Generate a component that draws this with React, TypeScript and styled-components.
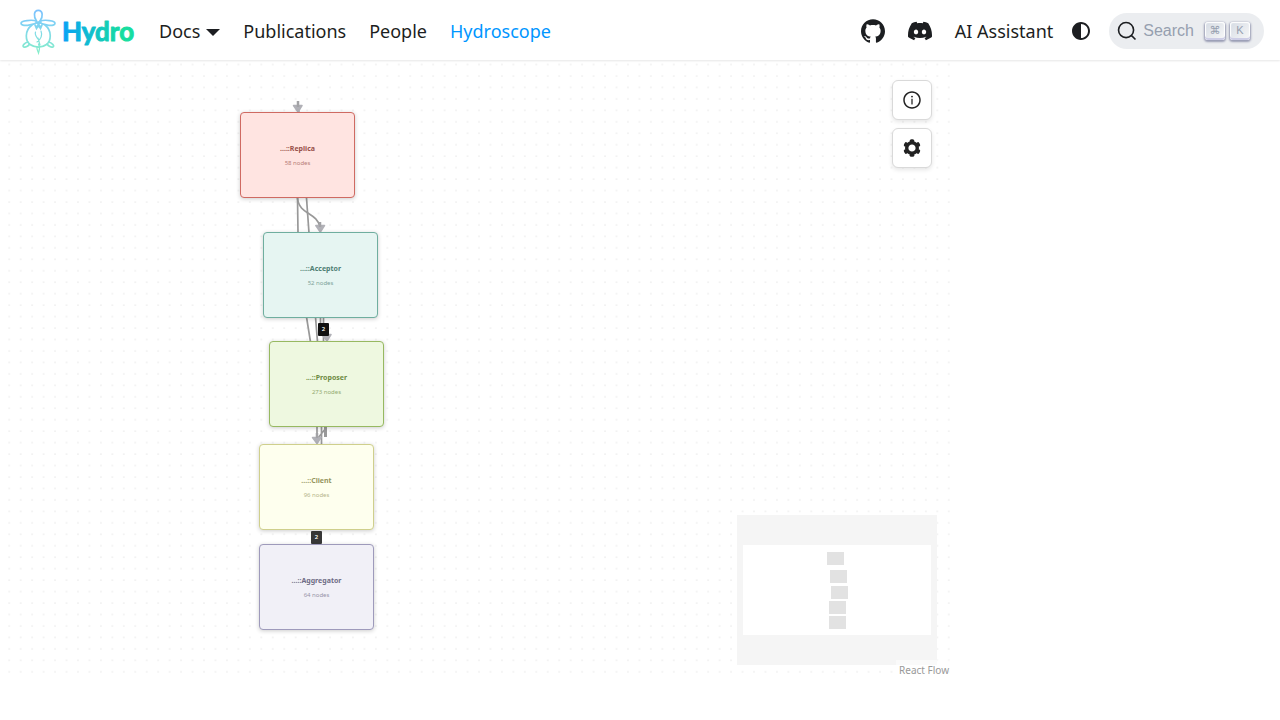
import React from "react";
import styled, { createGlobalStyle } from "styled-components";
import { SiGithub, SiDiscord } from "react-icons/si";
import { AiOutlineInfoCircle } from "react-icons/ai";

const GlobalStyle = createGlobalStyle`
  *, *::before, *::after { box-sizing: border-box; }
  body {
    margin: 0;
    background: #fff;
    color: #1c1e21;
    font-family: "Noto Sans", "Open Sans", sans-serif;
  }
`;

const Navbar = styled.nav`
  position: relative;
  z-index: 2;
  display: flex;
  align-items: center;
  justify-content: space-between;
  height: 60px;
  padding: 2px 16px 0 20px;
  background: #fff;
  box-shadow: 0 1px 2px rgba(0, 0, 0, 0.1);
`;

const NavGroup = styled.div`
  display: flex;
  align-items: center;
`;

const Brand = styled.a`
  display: flex;
  margin-right: 13px;
`;

const NavLink = styled.a<{ $active?: boolean }>`
  display: flex;
  align-items: center;
  gap: 6px;
  padding: 0 12px 0 11px;
  font-size: 18px;
  font-weight: 400;
  line-height: 28px;
  white-space: nowrap;
  text-decoration: none;
  color: ${(p) => (p.$active ? "#0096ff" : "#1c1e21")};
`;

const Caret = styled.span`
  margin-top: 2px;
  border: 7px solid transparent;
  border-top-color: currentColor;
  border-bottom-width: 0;
`;

const ModeToggle = styled.button`
  display: flex;
  align-items: center;
  justify-content: center;
  width: 32px;
  height: 32px;
  margin-right: 12px;
  padding: 0;
  border: 0;
  border-radius: 50%;
  background: none;
  color: inherit;
`;

const SearchButton = styled.button`
  display: flex;
  align-items: center;
  height: 36px;
  padding: 0 12px 0 8px;
  border: 0;
  border-radius: 40px;
  background: #ebedf0;
  color: #1c1e21;
`;

const SearchText = styled.span`
  padding: 0 9px 0 6px;
  font: 16px "Liberation Sans", Arial, sans-serif;
  color: #969faf;
`;

const Key = styled.kbd`
  display: flex;
  align-items: center;
  justify-content: center;
  width: 20px;
  height: 18px;
  margin-left: 2px;
  margin-right: 3px;
  padding-bottom: 2px;
  border-radius: 3px;
  background: linear-gradient(-225deg, #d5dbe4, #f8f8f8);
  box-shadow: inset 0 -2px 0 0 #cdcde6, inset 0 0 1px 1px #fff,
    0 1px 2px 1px rgba(30, 35, 90, 0.4);
  font: 11px "Liberation Sans", "DejaVu Sans", sans-serif;
  color: #969faf;

  &:last-child {
    margin-right: 2px;
  }
`;

const Workspace = styled.main`
  display: grid;
  grid-template-columns: minmax(0, 1fr) 328px;
  min-height: calc(100vh - 100px);
`;

const Canvas = styled.section`
  position: relative;
  overflow: hidden;
`;

const Layer = styled.svg`
  position: absolute;
  inset: 0;
  width: 100%;
  height: 100%;
`;

const Node = styled.article<{ $x: number; $y: number; $fill: string; $line: string; $ink: string }>`
  position: absolute;
  left: ${(p) => p.$x}px;
  top: ${(p) => p.$y}px;
  display: flex;
  flex-direction: column;
  align-items: center;
  justify-content: center;
  gap: 4px;
  width: 115px;
  height: 86px;
  padding-top: 2px;
  border: 1px solid ${(p) => p.$line};
  border-radius: 4px;
  background: ${(p) => p.$fill};
  box-shadow: 0 1px 4px rgba(0, 0, 0, 0.2);
  color: ${(p) => p.$ink};
`;

const NodeName = styled.strong`
  font-size: 7px;
  font-weight: 700;
  line-height: 10px;
`;

const NodeCount = styled.span`
  font-size: 6px;
  line-height: 10px;
  opacity: 0.7;
`;

const EdgeCount = styled.span<{ $x: number; $y: number; $fade?: boolean }>`
  position: absolute;
  left: ${(p) => p.$x}px;
  top: ${(p) => p.$y}px;
  width: 11px;
  height: 13px;
  border-radius: 1px;
  background: ${(p) => (p.$fade ? "rgba(20, 20, 20, 0.85)" : "#111")};
  color: #fff;
  font-size: 6px;
  font-weight: 600;
  line-height: 13px;
  text-align: center;
`;

const Controls = styled.div`
  position: absolute;
  top: 20px;
  right: 20px;
  display: flex;
  flex-direction: column;
  gap: 8px;
`;

const ControlButton = styled.button`
  display: flex;
  align-items: center;
  justify-content: center;
  width: 40px;
  height: 40px;
  padding: 0;
  border: 1px solid #d9d9d9;
  border-radius: 6px;
  background: #fff;
  box-shadow: 0 2px 4px rgba(0, 0, 0, 0.1);
  color: #222;
`;

const MiniMap = styled.svg`
  position: absolute;
  right: 15px;
  bottom: 15px;
  width: 200px;
  height: 150px;
  background: #fff;
`;

const Attribution = styled.a`
  position: absolute;
  right: 0;
  bottom: 0;
  padding: 3px;
  background: rgba(255, 255, 255, 0.5);
  color: #999;
  font-size: 10px;
  line-height: 14px;
  text-decoration: none;
`;

const nodes = [
  { name: "Replica", count: 58, x: 240, y: 52, fill: "#ffe4e1", line: "#cf6a62", ink: "#98504a" },
  { name: "Acceptor", count: 52, x: 263, y: 172, fill: "#e6f5f2", line: "#6fae9f", ink: "#4f7f74" },
  { name: "Proposer", count: 273, x: 269, y: 281, fill: "#eef8e0", line: "#97b961", ink: "#6d8a42" },
  { name: "Client", count: 96, x: 259, y: 384, fill: "#feffee", line: "#cfcf8c", ink: "#96965f" },
  { name: "Aggregator", count: 64, x: 259, y: 484, fill: "#f1f0f7", line: "#9e9abb", ink: "#6f6c85" },
];

const miniNodes = [
  [90, 37],
  [93, 55],
  [94, 71],
  [92, 86],
  [92, 101],
];

function Logo() {
  return (
    <svg width="115" height="50" viewBox="20 6 115 50" role="img" aria-label="Hydro">
      <defs>
        <linearGradient id="turtle" gradientUnits="userSpaceOnUse" x1="38" y1="9" x2="38" y2="54">
          <stop offset="0" stopColor="#7cc0ff" />
          <stop offset="0.35" stopColor="#7fd3f2" />
          <stop offset="1" stopColor="#86efc8" />
        </linearGradient>
        <linearGradient id="word" gradientUnits="userSpaceOnUse" x1="63" y1="0" x2="122" y2="0">
          <stop offset="0" stopColor="#0aa2f5" />
          <stop offset="1" stopColor="#17dda0" />
        </linearGradient>
      </defs>
      <g fill="none" stroke="url(#turtle)" strokeWidth="1.700" strokeLinecap="round">
        <path d="M36.500 21C33.500 17 33.500 10.300 38.300 10.300S43.200 17 40 21" />
        <path d="M36.500 21C32 19.500 21 20.500 21 23.300C21 27 33 25.500 38.300 22C44 25.500 55 27 55 23.300C55 20.500 45 19.500 40 21" />
        <path d="M32 25C24 31 25.500 41 30 44.500C35 48 42 48 46.500 44.500C51 41 52.500 31 45 25" />
        <path d="M35 25L36.500 28.500L38.500 25.500L40.500 28.500L42 25M36 22L41 27M41 22L36 27" />
        <path d="M28 42C24.500 43 22 45.500 23.500 46.800C25.500 48 28.500 46 29.500 44M48.500 42C52 43 54.700 45.500 53.200 46.800C51.200 48 48.200 46 47.200 44" />
        <path d="M35.500 32C34.500 35 36.500 37 38 39M41 31C42.500 35 41 39 37 42M38 38L40 45M37 47C36.500 50 38 51 38.500 53C39.500 50 40.500 48 38.500 44" strokeWidth="1.200" />
      </g>
      <text
        x="62"
        y="41"
        fill="url(#word)"
        stroke="url(#word)"
        strokeWidth="1"
        strokeLinejoin="round"
        fontFamily="Lato, sans-serif"
        fontSize="26"
        fontWeight="700"
      >
        Hydro
      </text>
    </svg>
  );
}

function Gear() {
  const teeth = [0, 60, 120, 180, 240, 300];
  return (
    <svg width="20" height="20" viewBox="-10 -10 20 20" fill="none" stroke="currentColor">
      <circle r="5.300" strokeWidth="3.400" />
      {teeth.map((angle) => (
        <path key={angle} d="M-0.700 -7.200H0.700" strokeWidth="3.200" strokeLinecap="round" transform={`rotate(${angle})`} />
      ))}
    </svg>
  );
}

function Edges() {
  return (
    <Layer aria-hidden="true">
      <defs>
        <pattern id="dots" x="3.500" y="-1.300" width="11.458" height="11.458" patternUnits="userSpaceOnUse">
          <circle cx="5.730" cy="5.730" r="0.500" fill="#c4c4c4" />
        </pattern>
      </defs>
      <rect width="100%" height="100%" fill="url(#dots)" />
      <g fill="none" stroke="#999" strokeWidth="1.700">
        <path d="M298 41V47L299 53" />
        <path d="M297.500 138L298 173M306.500 138L309 173" />
        <path d="M297.500 138C299 155 317 152 320 167" />
        <path d="M306.500 257L310.500 282M315.500 257L317.500 282M320.500 257V266M323.500 257V282" />
        <path d="M317 366V378M321.500 366V385M326 366V377M326 368L318 378" />
      </g>
      <path d="M325.500 366V377" stroke="#999" strokeWidth="3" />
      <g fill="#b1b1b7" stroke="#b1b1b7" strokeWidth="1.500" strokeLinejoin="round">
        <path d="M293.500 45.500H302L298 52Z" />
        <path d="M315.800 165.500H324.500L320.300 172Z" />
        <path d="M322 274.500H331L327 281Z" />
        <path d="M312.500 377.500H321L317 383.500Z" />
      </g>
      <path d="M298 41V47M320 162V167M317 373V378" stroke="#a3a3a6" strokeWidth="2.500" />
    </Layer>
  );
}

export default function App() {
  return (
    <>
      <GlobalStyle />
      <Navbar aria-label="Main">
        <NavGroup>
          <Brand href="#">
            <Logo />
          </Brand>
          <NavLink href="#docs">
            Docs
            <Caret />
          </NavLink>
          <NavLink href="#publications">Publications</NavLink>
          <NavLink href="#people">People</NavLink>
          <NavLink href="#hydroscope" $active>
            Hydroscope
          </NavLink>
        </NavGroup>
        <NavGroup>
          <NavLink href="#github" aria-label="GitHub">
            <SiGithub size={24} />
          </NavLink>
          <NavLink href="#discord" aria-label="Discord">
            <SiDiscord size={24} />
          </NavLink>
          <NavLink href="#assistant">AI Assistant</NavLink>
          <ModeToggle aria-label="Switch colour mode">
            <svg width="24" height="24" viewBox="0 0 24 24" fill="currentColor">
              <path d="m12 21c4.971 0 9-4.029 9-9s-4.029-9-9-9-9 4.029-9 9 4.029 9 9 9zm4.950-13.950c1.313 1.313 2.050 3.093 2.050 4.950s-0.738 3.637-2.050 4.950c-1.313 1.313-3.093 2.050-4.950 2.050v-14c1.857 0 3.637 0.737 4.950 2.050z" />
            </svg>
          </ModeToggle>
          <SearchButton>
            <svg width="20" height="20" viewBox="0 0 20 20" fill="none" stroke="currentColor" strokeWidth="1.600" strokeLinecap="round">
              <path d="M14.386 14.386l4.088 4.088-4.088-4.088c-2.942 2.942-7.711 2.942-10.653 0-2.942-2.942-2.942-7.711 0-10.653 2.942-2.942 7.711-2.942 10.653 0 2.942 2.942 2.942 7.711 0 10.653z" />
            </svg>
            <SearchText>Search</SearchText>
            <Key>⌘</Key>
            <Key>K</Key>
          </SearchButton>
        </NavGroup>
      </Navbar>
      <Workspace>
        <Canvas aria-label="Graph">
          <Edges />
          {nodes.map((n) => (
            <Node key={n.name} $x={n.x} $y={n.y} $fill={n.fill} $line={n.line} $ink={n.ink}>
              <NodeName>...::{n.name}</NodeName>
              <NodeCount>{n.count} nodes</NodeCount>
            </Node>
          ))}
          <EdgeCount $x={318} $y={263}>2</EdgeCount>
          <EdgeCount $x={311} $y={471} $fade>2</EdgeCount>
          <Controls>
            <ControlButton aria-label="Information">
              <AiOutlineInfoCircle size={20} />
            </ControlButton>
            <ControlButton aria-label="Settings">
              <Gear />
            </ControlButton>
          </Controls>
          <MiniMap viewBox="0 0 200 150" role="img" aria-label="Mini map">
            {miniNodes.map(([x, y]) => (
              <rect key={y} x={x} y={y} width="17" height="13" fill="#e2e2e2" />
            ))}
            <path d="M0 0H200V150H0ZM6 30V120H194V30Z" fill="#f5f5f5" fillRule="evenodd" />
          </MiniMap>
          <Attribution href="#react-flow">React Flow</Attribution>
        </Canvas>
      </Workspace>
    </>
  );
}
